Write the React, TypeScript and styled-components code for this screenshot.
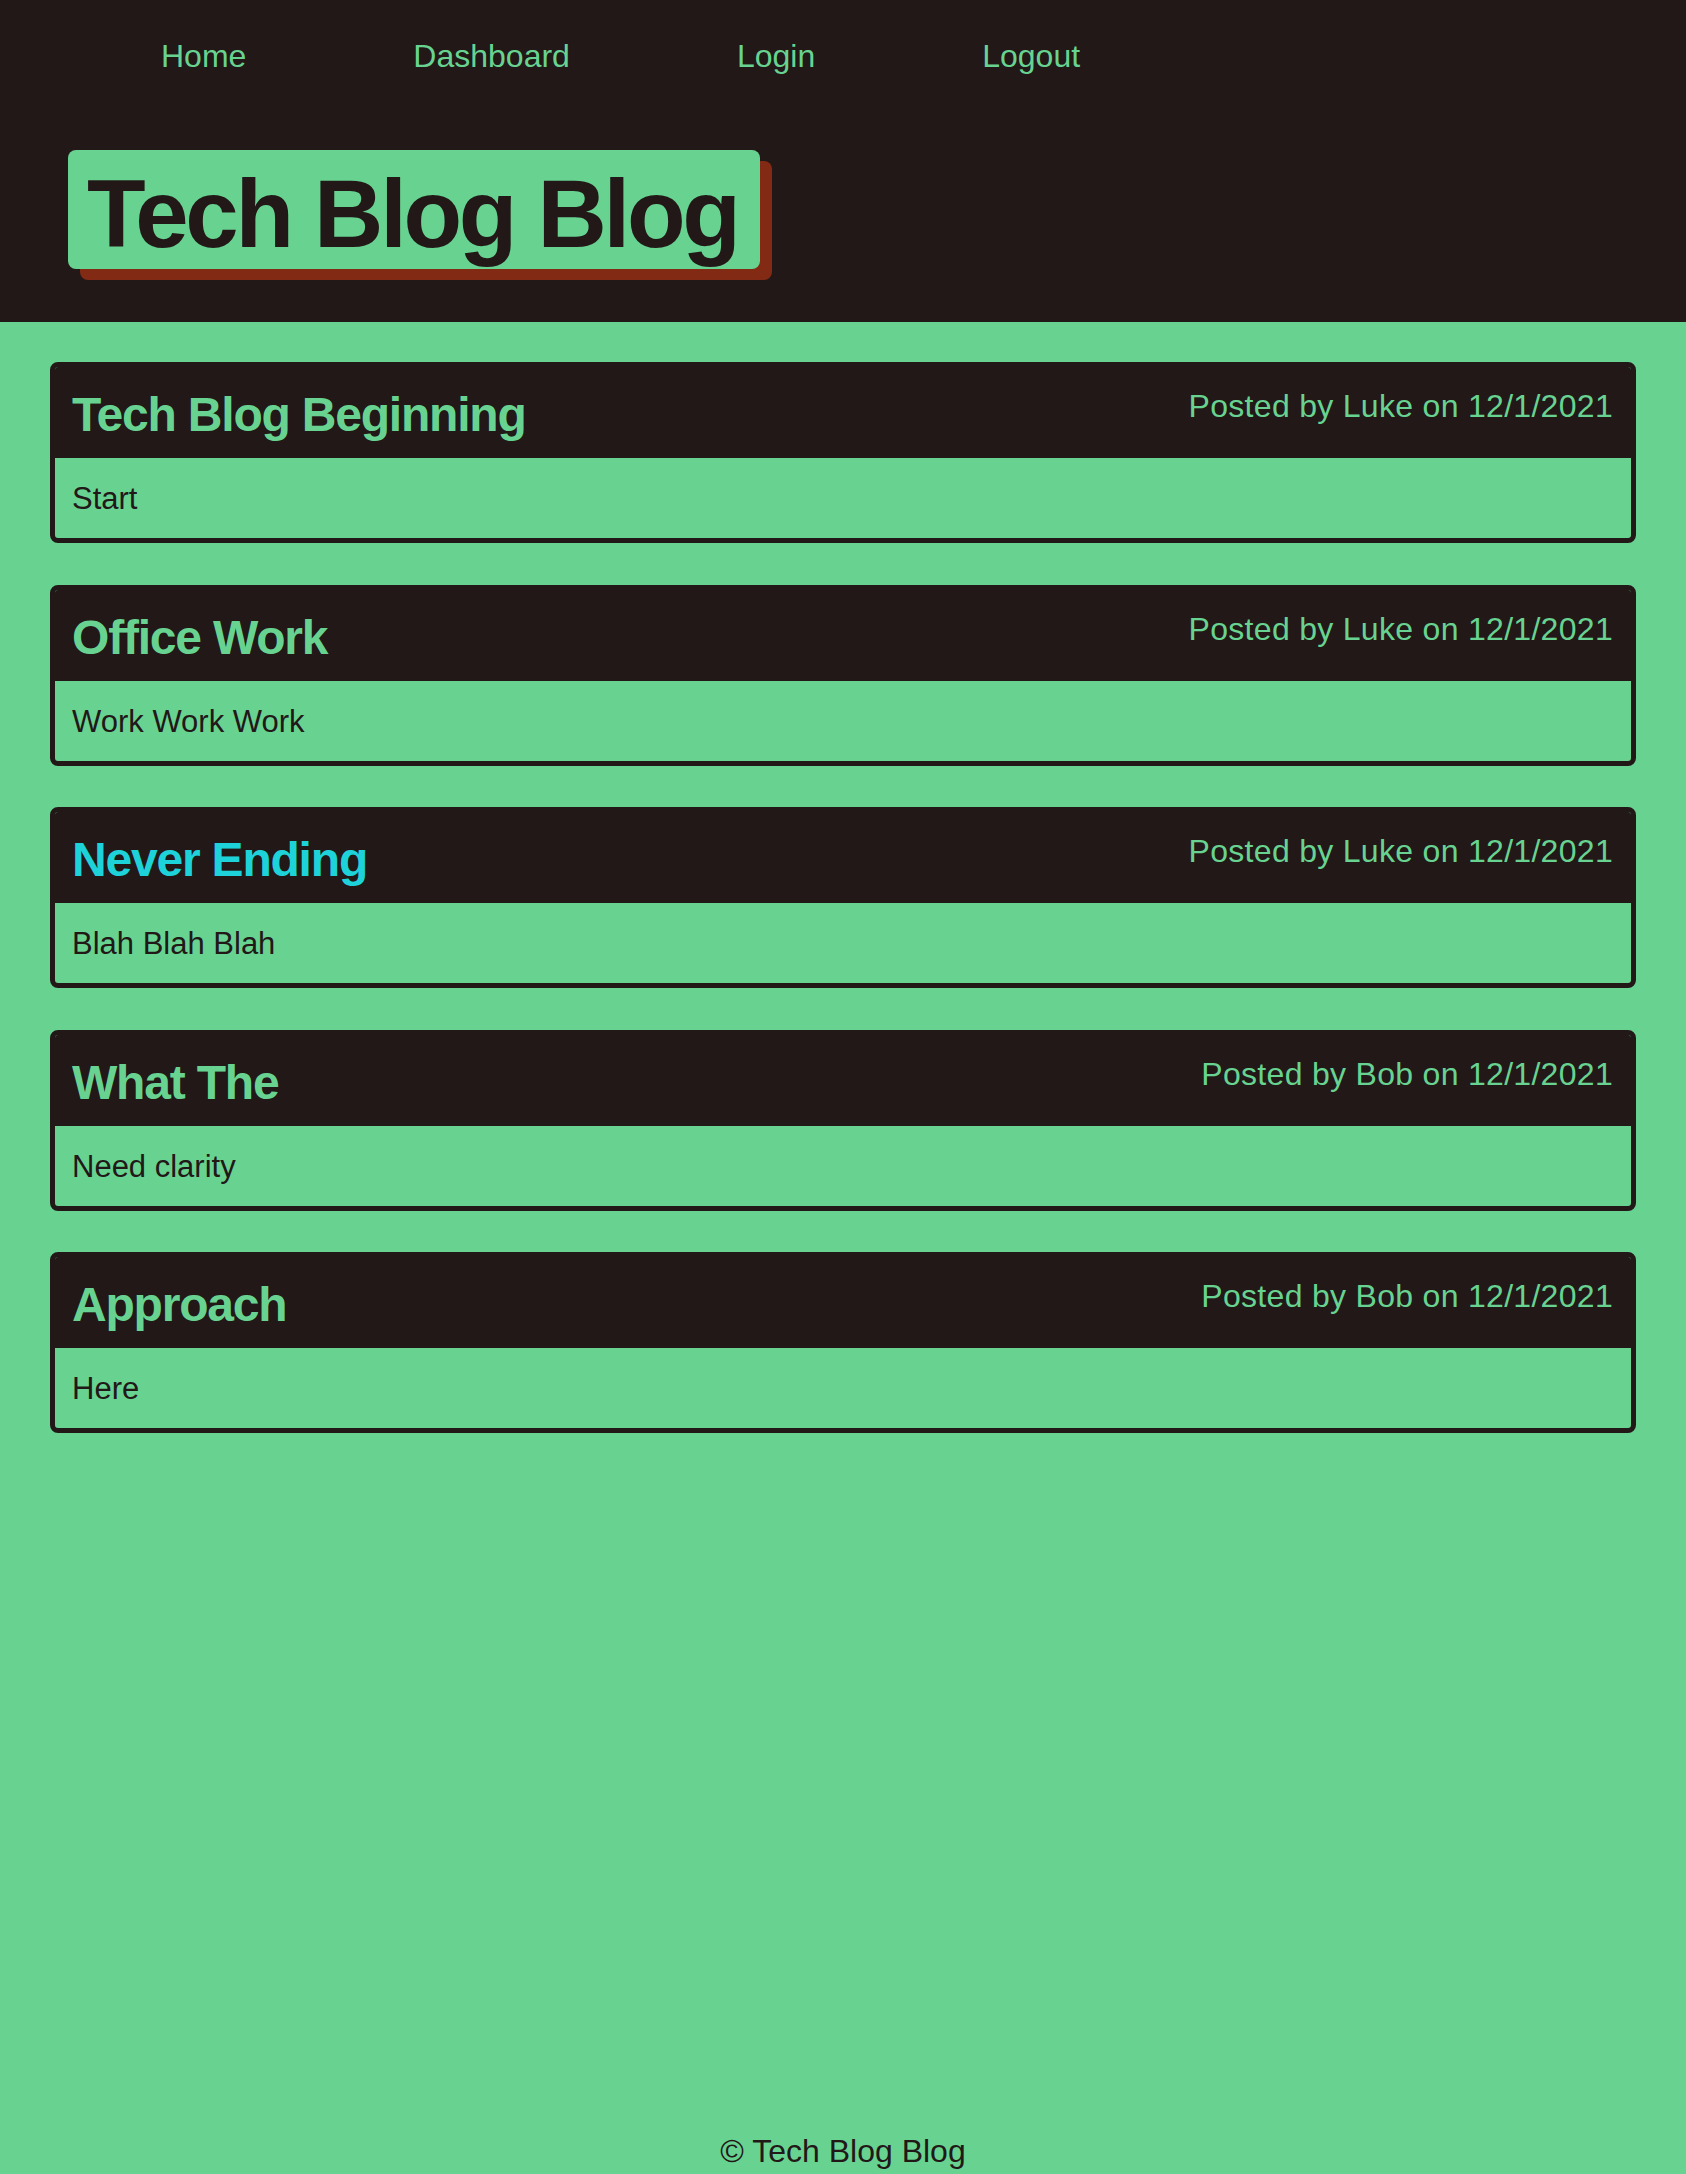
import React from 'react';
import styled, { createGlobalStyle } from 'styled-components';

const GREEN = '#68d391';
const DARK = '#211817';
const RUST = '#822a14';
const CYAN = '#1dd3d9';

const GlobalStyle = createGlobalStyle`
  html, body {
    margin: 0;
    padding: 0;
  }
  body {
    background: ${GREEN};
    font-family: "Liberation Sans", Arial, sans-serif;
    color: ${DARK};
  }
`;

const Page = styled.div`
  min-height: 100vh;
  display: flex;
  flex-direction: column;
`;

const Header = styled.header`
  background: ${DARK};
  padding: 38px 0 53px 68px;
`;

const Nav = styled.nav`
  display: flex;
  gap: 167px;
  padding-left: 93px;
`;

const NavLink = styled.a`
  color: ${GREEN};
  font-size: 32px;
  line-height: 37px;
  text-decoration: none;
  cursor: pointer;
`;

const TitleBox = styled.h1`
  display: inline-block;
  margin: 75px 0 0;
  padding: 10px 22px 2px 19px;
  background: ${GREEN};
  color: ${DARK};
  border-radius: 8px;
  box-shadow: 12px 11px 0 ${RUST};
  font-size: 96px;
  line-height: 107px;
  font-weight: 700;
  letter-spacing: -3.3px;
`;

const Main = styled.main`
  flex: 1;
  display: flex;
  flex-direction: column;
  gap: 41.5px;
  padding: 40px 50px;
`;

const Card = styled.article`
  border: 5px solid ${DARK};
  border-radius: 8px;
  overflow: hidden;
  background: ${GREEN};
`;

const CardHead = styled.div`
  background: ${DARK};
  display: flex;
  justify-content: space-between;
  align-items: flex-start;
  padding: 20px 18px 16px 17px;
`;

const CardTitle = styled.h2<{ $highlight?: boolean }>`
  margin: 0;
  font-size: 48px;
  line-height: 55px;
  font-weight: 700;
  letter-spacing: -1.2px;
  color: ${(p) => (p.$highlight ? CYAN : GREEN)};
`;

const Meta = styled.span`
  margin-top: 1px;
  color: ${GREEN};
  font-size: 32px;
  line-height: 37px;
  letter-spacing: 0.3px;
`;

const CardBody = styled.p`
  margin: 0;
  padding: 1px 17px 0;
  font-size: 31px;
  line-height: 79px;
  color: ${DARK};
`;

const Footer = styled.footer`
  text-align: center;
  font-size: 32px;
  line-height: 37px;
  padding-bottom: 4px;
  color: ${DARK};
`;

const posts = [
  { title: 'Tech Blog Beginning', author: 'Luke', date: '12/1/2021', body: 'Start' },
  { title: 'Office Work', author: 'Luke', date: '12/1/2021', body: 'Work Work Work' },
  { title: 'Never Ending', author: 'Luke', date: '12/1/2021', body: 'Blah Blah Blah', highlight: true },
  { title: 'What The', author: 'Bob', date: '12/1/2021', body: 'Need clarity' },
  { title: 'Approach', author: 'Bob', date: '12/1/2021', body: 'Here' },
];

const App: React.FC = () => {
  return (
    <Page>
      <GlobalStyle />
      <Header>
        <Nav>
          <NavLink>Home</NavLink>
          <NavLink>Dashboard</NavLink>
          <NavLink>Login</NavLink>
          <NavLink>Logout</NavLink>
        </Nav>
        <TitleBox>Tech Blog Blog</TitleBox>
      </Header>
      <Main>
        {posts.map((post) => (
          <Card key={post.title}>
            <CardHead>
              <CardTitle $highlight={post.highlight}>{post.title}</CardTitle>
              <Meta>
                Posted by {post.author} on {post.date}
              </Meta>
            </CardHead>
            <CardBody>{post.body}</CardBody>
          </Card>
        ))}
      </Main>
      <Footer>© Tech Blog Blog</Footer>
    </Page>
  );
};

export default App;
